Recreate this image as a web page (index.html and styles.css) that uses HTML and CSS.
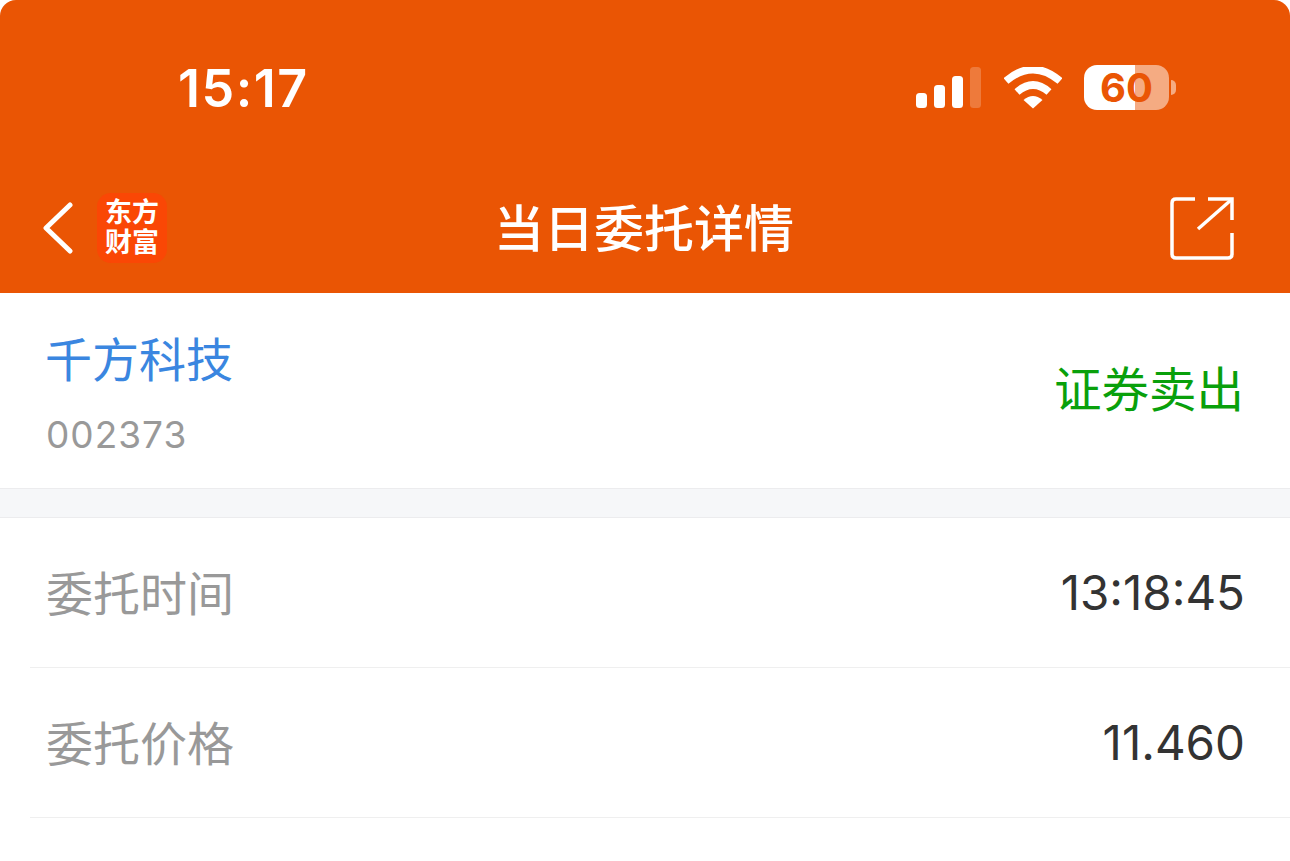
FILE: index.html
```html
<!DOCTYPE html>
<html lang="zh-CN">
<head>
    <meta charset="UTF-8">
    <meta name="viewport" content="width=device-width, initial-scale=1.0">
    <title>当日委托详情</title>
    <link rel="stylesheet" href="styles.css">
</head>
<body>
    <div class="top">
        <div class="status-bar">
            <span class="clock">15:17</span>
            <div class="status-icons">
                <svg class="signal" width="66" height="42" viewBox="0 0 66 42">
                    <rect x="1" y="26" width="11" height="15" rx="3.5" fill="#fff"/>
                    <rect x="19" y="18" width="11" height="23" rx="3.5" fill="#fff"/>
                    <rect x="37" y="9" width="11" height="32" rx="3.5" fill="#fff"/>
                    <rect x="55" y="0" width="11" height="41" rx="3.5" fill="#fff" fill-opacity="0.22"/>
                </svg>
                <svg class="wifi" width="58" height="42" viewBox="0 0 58 42">
                    <path d="M2 14 Q29 -9 56 14" fill="none" stroke="#fff" stroke-width="7.5" stroke-linejoin="round"/>
                    <path d="M13 25 Q29 11 45 25" fill="none" stroke="#fff" stroke-width="7.5"/>
                    <path d="M19.5 33 Q29 25 38.500 33 L29 41.500 Z" fill="#fff"/>
                </svg>
                <div class="battery">
                    <div class="battery-body">60</div>
                    <div class="battery-cap"></div>
                </div>
            </div>
        </div>
        <div class="nav-bar">
            <div class="nav-left">
                <svg width="32" height="52" viewBox="0 0 32 52">
                    <path d="M28 3 L4 26 L28 49" fill="none" stroke="#fff" stroke-width="5" stroke-linecap="round" stroke-linejoin="round"/>
                </svg>
                <div class="logo">东方<br>财富</div>
            </div>
            <h1 class="nav-title">当日委托详情</h1>
            <svg class="share" width="64" height="64" viewBox="0 0 64 64">
                <path d="M25 3 H6 Q2 3 2 7 V58 Q2 62 6 62 H58 Q62 62 62 58 V37" fill="none" stroke="#fff" stroke-width="3.500"/>
                <path d="M38 3 H62 V24" fill="none" stroke="#fff" stroke-width="3.500"/>
                <path d="M28 33 L61 4" fill="none" stroke="#fff" stroke-width="3.500"/>
            </svg>
        </div>
    </div>

    <div class="stock">
        <div class="stock-info">
            <div class="stock-name">千方科技</div>
            <div class="stock-code">002373</div>
        </div>
        <div class="stock-action">证券卖出</div>
    </div>

    <div class="divider"></div>

    <div class="rows">
        <div class="row">
            <span class="row-label">委托时间</span>
            <span class="row-value">13:18:45</span>
        </div>
        <div class="row">
            <span class="row-label">委托价格</span>
            <span class="row-value">11.460</span>
        </div>
    </div>
</body>
</html>
```

FILE: styles.css
```css
body {
    margin: 0;
    background: #ffffff;
    font-family: Inter, "Noto Sans CJK SC", sans-serif;
}

.top {
    height: 293px;
    background: #EA5504;
    border-radius: 16px 16px 0 0;
    color: #ffffff;
}

.status-bar {
    height: 175px;
    display: flex;
    justify-content: space-between;
    align-items: center;
    padding: 0 114px 0 178px;
}
.clock {
    margin-top: 2px;
    font-size: 52px;
    font-weight: 600;
    letter-spacing: 1.5px;
}
.status-icons {
    display: flex;
    align-items: center;
    gap: 22px;
}
.wifi {
    margin-left: 1px;
}
.battery {
    display: flex;
    align-items: center;
    gap: 2px;
}
.battery-body {
    width: 85px;
    height: 45px;
    border-radius: 13px;
    background: linear-gradient(90deg, #ffffff 60%, #F5AB82 60%);
    line-height: 45px;
    text-align: center;
    font-size: 40px;
    font-weight: 700;
    color: #EA5504;
}
.battery-cap {
    width: 5px;
    height: 15px;
    background: #F5AB82;
    border-radius: 0 7px 7px 0;
}

.nav-bar {
    height: 118px;
    display: grid;
    grid-template-columns: 1fr auto 1fr;
    align-items: center;
    padding: 0 56px 13px 42px;
    box-sizing: border-box;
}
.nav-left {
    display: flex;
    align-items: center;
    gap: 23px;
}
.logo {
    flex: none;
    width: 70px;
    height: 70px;
    border-radius: 14px;
    background: #FA4705;
    font-weight: 700;
    font-size: 27px;
    line-height: 30px;
    text-align: center;
    box-sizing: border-box;
    padding-top: 5px;
    color: #ffffff;
}
.nav-title {
    margin: 2px 0 0 12px;
    font-size: 50px;
    font-weight: 500;
    line-height: 70px;
}
.share {
    justify-self: end;
}

.stock {
    height: 195px;
    display: flex;
    justify-content: space-between;
    padding: 0 46px 0 45px;
}
.stock-info {
    padding-top: 36px;
}
.stock-name {
    font-size: 47px;
    line-height: 62px;
    color: #3A86E0;
}
.stock-code {
    margin: 22px 0 0 1px;
    font-size: 37px;
    line-height: 44px;
    letter-spacing: 1px;
    color: #999999;
}
.stock-action {
    align-self: center;
    margin-bottom: 8px;
    font-size: 47.5px;
    color: #09A00B;
}

.divider {
    height: 28px;
    background: #F6F7F9;
    border-top: 1px solid #ECECEE;
    border-bottom: 1px solid #ECECEE;
}

.rows {
    padding-left: 30px;
}
.row {
    height: 149px;
    display: flex;
    justify-content: space-between;
    align-items: center;
    padding: 0 45px 0 16px;
    border-bottom: 1px solid #EFEFEF;
}
.row-label {
    margin-bottom: 4px;
    font-size: 47px;
    color: #999999;
}
.row-value {
    font-size: 47.5px;
    color: #333333;
}
```
